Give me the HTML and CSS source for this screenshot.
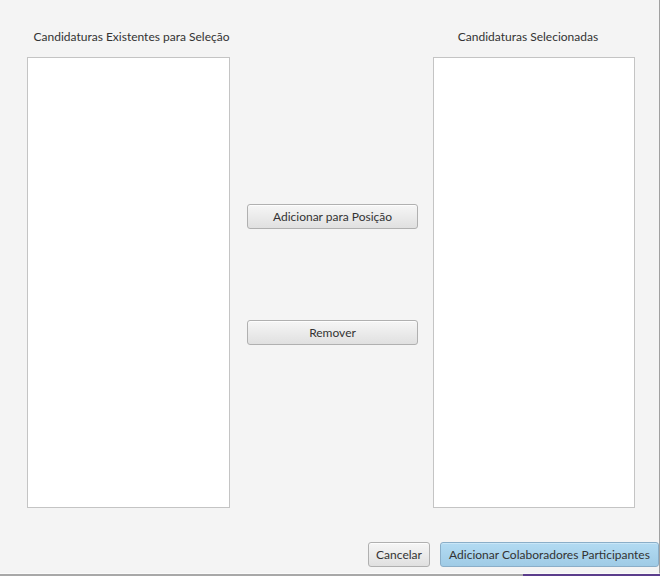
FILE: index.html
```html
<!DOCTYPE html>
<html lang="pt">
<head>
<meta charset="utf-8">
<title>Candidaturas</title>
<link rel="stylesheet" href="styles.css">
</head>
<body>
<div class="window">
  <div class="content">
    <div class="columns">
      <div class="col col-left">
        <div class="label label-left">Candidaturas Existentes para Seleção</div>
        <div class="list"></div>
      </div>
      <div class="mid">
        <button class="btn btn-add">Adicionar para Posição</button>
        <button class="btn btn-remove">Remover</button>
      </div>
      <div class="col col-right">
        <div class="label label-right">Candidaturas Selecionadas</div>
        <div class="list"></div>
      </div>
    </div>
    <div class="actions">
      <button class="btn btn-cancel">Cancelar</button>
      <button class="btn btn-default">Adicionar Colaboradores Participantes</button>
    </div>
  </div>
  <div class="edge"><span class="edge-grey"></span><span class="edge-purple"></span></div>
</div>
</body>
</html>
```
FILE: styles.css
```css
* { box-sizing: border-box; }
html, body { margin: 0; padding: 0; }
body {
  width: 660px;
  height: 576px;
  overflow: hidden;
  background: #f4f4f4;
  font-family: "Lato", "Open Sans", sans-serif;
  font-size: 12px;
  color: #333;
}
.window {
  width: 660px;
  height: 576px;
  display: flex;
  flex-direction: column;
}
.content {
  flex: 1;
  border-right: 1px solid #a0a0a0;
  border-bottom: 1px solid #fafafa;
}
.columns {
  display: flex;
  padding-left: 27px;
}
.col-left { width: 203px; }
.col-right { width: 202px; }
.label {
  padding-top: 29px;
  height: 45px;
  line-height: 16px;
  margin-bottom: 12px;
  text-align: center;
  white-space: nowrap;
}
.label-left { padding-left: 6px; }
.label-right { padding-right: 12px; }
.list {
  height: 451px;
  background: #fff;
  border: 1px solid #c4c4c4;
}
.mid {
  width: 203px;
  padding-left: 17px;
  display: flex;
  flex-direction: column;
  align-items: flex-start;
}
.btn {
  font-family: inherit;
  font-size: 12px;
  color: #333;
  height: 25px;
  padding: 0 8px;
  border: 1px solid #b0b0b0;
  border-radius: 3px;
  background: linear-gradient(#f6f6f6, #e0e0e0);
  box-shadow: inset 0 1px 0 #fdfdfd;
  line-height: 23px;
  white-space: nowrap;
}
.btn-add { width: 171px; margin-top: 204px; }
.btn-remove { width: 171px; margin-top: 91px; }
.actions {
  display: flex;
  justify-content: flex-end;
  gap: 10px;
  margin-top: 34px;
}
.btn-cancel { width: 62px; padding: 0; }
.btn-default {
  width: 219px;
  padding: 0;
  border-color: #8aaec8;
  background: linear-gradient(#b3dbf2, #9fcbe6);
  box-shadow: inset 0 1px 0 #c9e6f7;
}
.edge {
  display: flex;
  height: 2px;
}
.edge-grey { width: 523px; background: #a8a8a8; }
.edge-purple { flex: 1; background: #5b3d8c; }
```
